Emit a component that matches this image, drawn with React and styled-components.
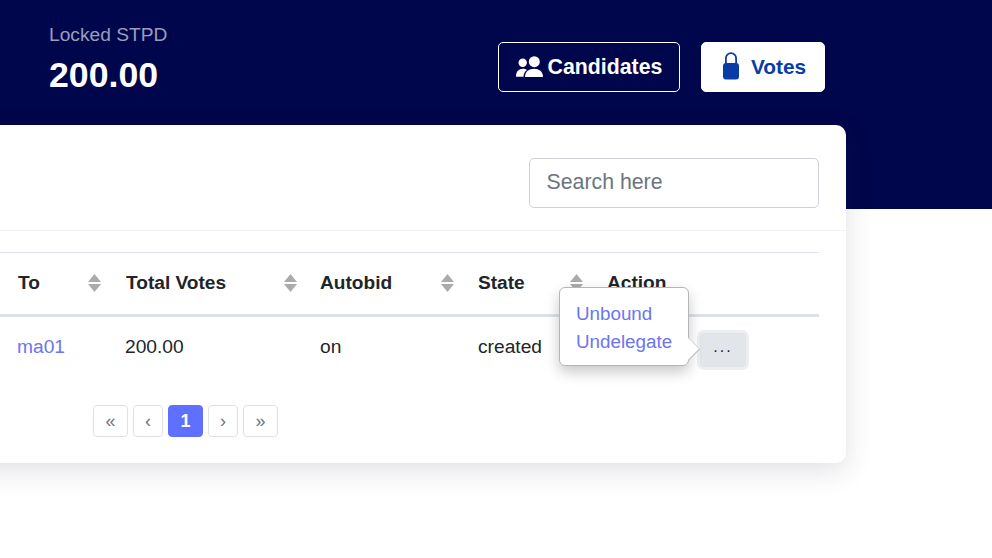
import React from 'react';
import styled, { createGlobalStyle } from 'styled-components';

const GlobalStyle = createGlobalStyle`
  html, body {
    margin: 0;
    background: #fff;
    overflow: hidden;
  }
  body {
    font-family: 'Liberation Sans', Arial, sans-serif;
    color: #212529;
  }
`;

const Page = styled.div`
  width: 992px;
  height: 558px;
  position: relative;
  overflow: hidden;
`;

const Hero = styled.header`
  height: 209px;
  box-sizing: border-box;
  background: #00064b;
  padding: 25px 167px 0 49px;
  display: flex;
  justify-content: space-between;
  align-items: flex-start;
`;

const Balance = styled.div`
  display: flex;
  flex-direction: column;
`;

const BalanceLabel = styled.div`
  font-size: 19.2px;
  line-height: 20px;
  color: #9a9dbd;
`;

const BalanceValue = styled.div`
  margin-top: 8px;
  font-size: 35.7px;
  line-height: 44px;
  font-weight: 700;
  color: #fff;
`;

const HeroActions = styled.div`
  display: flex;
  gap: 21px;
  margin-top: 17px;
`;

const HeroButton = styled.button`
  height: 50px;
  box-sizing: border-box;
  display: flex;
  align-items: center;
  justify-content: center;
  gap: ${({ $solid }) => ($solid ? '11px' : '5px')};
  width: ${({ $solid }) => ($solid ? '124px' : '182px')};
  padding: ${({ $solid }) => ($solid ? '0 0 0 2px' : '0')};
  border: 1px solid #fff;
  border-radius: 5px;
  background: ${({ $solid }) => ($solid ? '#fff' : 'transparent')};
  color: ${({ $solid }) => ($solid ? '#0a3ca8' : '#fff')};
  font-family: inherit;
  font-size: ${({ $solid }) => ($solid ? '20.8px' : '21.3px')};
  font-weight: 700;
`;

const FriendsGlyph = styled.svg`
  margin-bottom: 2px;
`;

const LockGlyph = styled.svg`
  margin-bottom: 3px;
`;

const Card = styled.section`
  width: 1322px;
  height: 338px;
  box-sizing: border-box;
  margin: -84px 0 0 -476px;
  position: relative;
  background: #fff;
  border-radius: 10px;
  box-shadow: 0 8px 28px rgba(40, 44, 70, 0.14);
`;

const CardTop = styled.div`
  height: 106px;
  box-sizing: border-box;
  padding: 33px 27px 0 0;
  display: flex;
  justify-content: flex-end;
  align-items: flex-start;
  border-bottom: 1px solid #f1f2f4;
`;

const SearchInput = styled.input`
  width: 290px;
  height: 50px;
  box-sizing: border-box;
  padding: 0 17px 2px 16.5px;
  border: 1px solid #ced1d6;
  border-radius: 5px;
  font-family: 'Liberation Sans', Arial, sans-serif;
  font-size: 21.3px;
  color: #495057;
  outline: none;
  &::placeholder {
    color: #6c757d;
    opacity: 1;
  }
`;

const Table = styled.table`
  width: 819px;
  margin: 21px 0 0 476px;
  border-collapse: collapse;
  table-layout: fixed;
`;

const HeadCell = styled.th`
  height: 63px;
  box-sizing: border-box;
  padding: 0 0 0 18px;
  border-top: 1px solid #dee2e6;
  border-bottom: 3px solid #dee2e6;
  text-align: left;
  font-size: 19.1px;
  font-weight: 700;
  color: #212529;
  width: ${({ $width }) => $width}px;
`;

const HeadInner = styled.div`
  display: flex;
  justify-content: space-between;
  align-items: center;
  padding: 0 ${({ $trim }) => $trim}px 2px 0;
`;

const BodyCell = styled.td`
  height: 60px;
  padding: 0 0 0 ${({ $inset }) => $inset}px;
  font-size: 19.2px;
  color: #212529;
`;

const NameLink = styled.a`
  color: #6c75f0;
`;

const Pager = styled.nav`
  display: flex;
  gap: 5px;
  margin: 28px 0 0 569px;
`;

const PageButton = styled.button`
  width: ${({ $wide }) => ($wide ? '35px' : '30px')};
  height: 32px;
  padding: 0;
  border: 1px solid ${({ $active }) => ($active ? '#5f6fff' : '#dee2e6')};
  border-radius: 4px;
  background: ${({ $active }) => ($active ? '#5f6fff' : '#fff')};
  color: ${({ $active }) => ($active ? '#fff' : '#6c757d')};
  font-family: inherit;
  font-size: 18px;
  font-weight: ${({ $active }) => ($active ? 700 : 400)};
`;

const MoreButton = styled.button`
  position: absolute;
  left: 1176px;
  top: 208px;
  width: 46px;
  height: 34px;
  padding: 0 0 6px;
  border: 1px solid #dfe2e7;
  border-radius: 4px;
  background: #e2e5ea;
  box-shadow: 0 0 0 3px #eceef2;
  color: #212529;
  font-family: inherit;
  font-size: 16px;
  letter-spacing: 2px;
`;

const Popover = styled.div`
  position: absolute;
  left: 1035px;
  top: 162px;
  width: 130px;
  height: 79px;
  box-sizing: border-box;
  padding: 12px 16px;
  background: #fff;
  border: 1px solid #b4b6ba;
  border-radius: 6px;
  box-shadow: 0 6px 14px rgba(0, 0, 0, 0.22);
  display: flex;
  flex-direction: column;
  &::after {
    content: '';
    position: absolute;
    right: -8.5px;
    top: 53px;
    width: 15px;
    height: 15px;
    background: #fff;
    border-top: 1px solid #d5d6d9;
    border-right: 1px solid #b4b6ba;
    transform: rotate(45deg);
  }
`;

const PopoverLink = styled.a`
  font-size: 18.8px;
  line-height: 28px;
  color: #6c75f0;
`;

function SortIcon() {
  return (
    <svg width="13" height="18" viewBox="0 0 13 18">
      <path d="M6.5 0L13 8H0Z" fill="#ababab" />
      <path d="M6.5 18L13 10H0Z" fill="#ababab" />
    </svg>
  );
}

function FriendsIcon() {
  return (
    <FriendsGlyph width="27" height="21" viewBox="0 0 27 21" fill="currentColor">
      <circle cx="6.7" cy="6.7" r="4.2" />
      <circle cx="18.3" cy="5.7" r="5.5" />
      <path d="M0 20.7C0 15.5 3 12.8 6.5 12.8C8.5 12.8 10 13.3 11 14C8.7 15.5 7.5 18 7.5 20.7Z" />
      <path d="M9 21C9 15.5 13 12.7 18 12.7C23 12.7 27 15.5 27 21Z" />
    </FriendsGlyph>
  );
}

function LockIcon() {
  return (
    <LockGlyph width="18" height="28" viewBox="0 0 18 28">
      <path d="M3.9 12V6.2a5.1 5.1 0 0 1 10.2 0V12" fill="none" stroke="#0a3ca8" strokeWidth="1.8" />
      <rect x="1" y="11" width="16" height="16.5" rx="3" fill="#0a3ca8" />
    </LockGlyph>
  );
}

const columns = [
  { label: 'To', width: 108, trim: 7.5 },
  { label: 'Total Votes', width: 194, trim: 5.5 },
  { label: 'Autobid', width: 158, trim: 6.5 },
  { label: 'State', width: 129, trim: 6.5 },
  { label: 'Action', width: 230, trim: 6.5, plain: true },
];

export default function App() {
  return (
    <Page>
      <GlobalStyle />
      <Hero>
        <Balance>
          <BalanceLabel>Locked STPD</BalanceLabel>
          <BalanceValue>200.00</BalanceValue>
        </Balance>
        <HeroActions>
          <HeroButton>
            <FriendsIcon />
            Candidates
          </HeroButton>
          <HeroButton $solid>
            <LockIcon />
            Votes
          </HeroButton>
        </HeroActions>
      </Hero>
      <Card>
        <CardTop>
          <SearchInput placeholder="Search here" />
        </CardTop>
        <Table>
          <thead>
            <tr>
              {columns.map((col) => (
                <HeadCell key={col.label} $width={col.width}>
                  <HeadInner $trim={col.trim}>
                    {col.label}
                    {!col.plain && <SortIcon />}
                  </HeadInner>
                </HeadCell>
              ))}
            </tr>
          </thead>
          <tbody>
            <tr>
              <BodyCell $inset={17}><NameLink>ma01</NameLink></BodyCell>
              <BodyCell $inset={17}>200.00</BodyCell>
              <BodyCell $inset={18}>on</BodyCell>
              <BodyCell $inset={18}>created</BodyCell>
              <BodyCell $inset={18} />
            </tr>
          </tbody>
        </Table>
        <Pager>
          <PageButton $wide>«</PageButton>
          <PageButton>‹</PageButton>
          <PageButton $wide $active>1</PageButton>
          <PageButton>›</PageButton>
          <PageButton $wide>»</PageButton>
        </Pager>
        <MoreButton>...</MoreButton>
        <Popover>
          <PopoverLink>Unbound</PopoverLink>
          <PopoverLink>Undelegate</PopoverLink>
        </Popover>
      </Card>
    </Page>
  );
}
